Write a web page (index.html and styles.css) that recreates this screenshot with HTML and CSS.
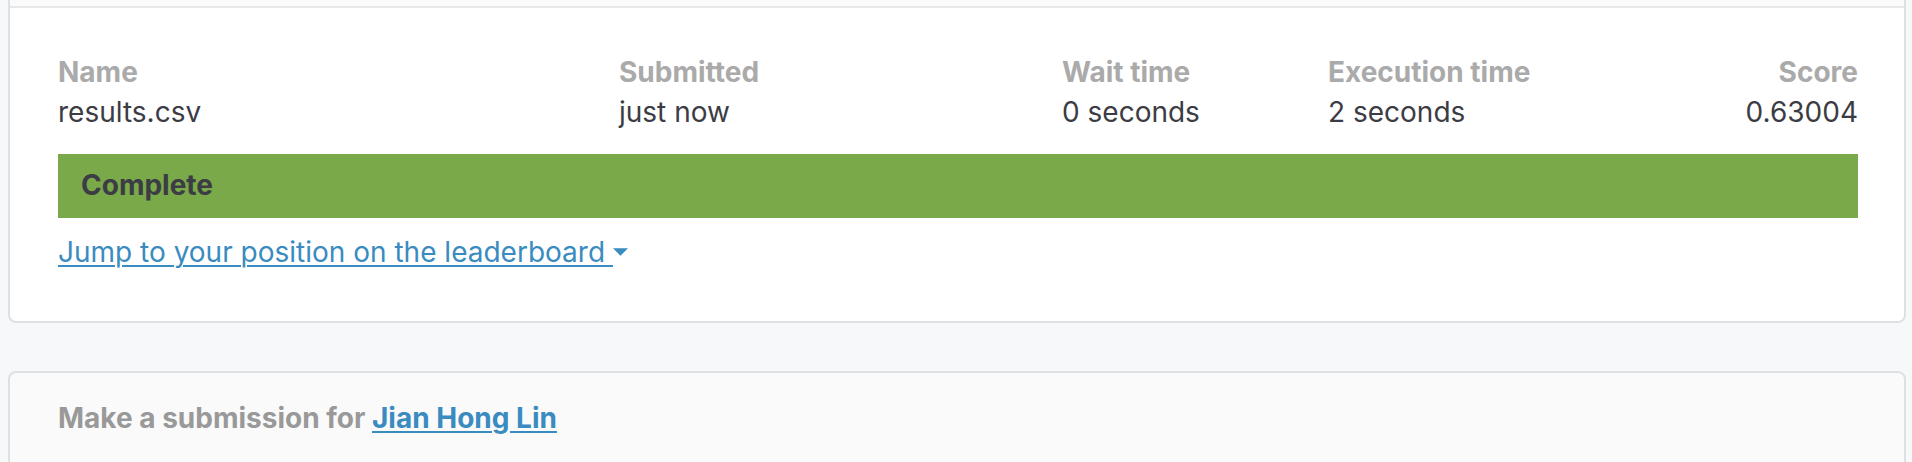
FILE: index.html
```html
<!DOCTYPE html>
<html lang="en">
<head>
<meta charset="utf-8">
<title>Submission</title>
<link rel="stylesheet" href="styles.css">
</head>
<body>
<div class="page">
  <section class="card result">
    <div class="card-head"></div>
    <div class="card-body">
      <div class="grid">
        <div class="label">Name</div>
        <div class="label">Submitted</div>
        <div class="label">Wait time</div>
        <div class="label">Execution time</div>
        <div class="label right">Score</div>
        <div class="value">results.csv</div>
        <div class="value">just now</div>
        <div class="value">0 seconds</div>
        <div class="value">2 seconds</div>
        <div class="value right">0.63004</div>
      </div>
      <div class="status">Complete</div>
      <a class="jump" href="#">Jump to your position on the leaderboard <svg class="caret" width="15" height="8" viewBox="0 0 15 8"><path d="M0 0.3h15L7.5 7.8z" fill="#3a8bbf"/></svg></a>
    </div>
  </section>
  <section class="card submit">
    <p class="submit-text">Make a submission for <a class="user" href="#">Jian Hong Lin</a></p>
  </section>
</div>
</body>
</html>
```
FILE: styles.css
```css
html, body {
  margin: 0;
  padding: 0;
  background: #f7f8fa;
  font-family: Inter, "Liberation Sans", Arial, sans-serif;
  font-size: 28px;
  line-height: 40px;
}
.page {
  padding: 0 6px 0 8px;
}
.card {
  border: 2px solid #dfe0e2;
  border-radius: 8px;
  overflow: hidden;
}
.result {
  margin-top: -40px;
  background: #fff;
}
.card-head {
  height: 44px;
  background: #fafafa;
  border-bottom: 2px solid #e8e8ea;
}
.card-body {
  padding: 44px 46px 49px 48px;
}
.grid {
  display: grid;
  grid-template-columns: 561px 443px 266px 1fr auto;
}
.label {
  color: #aaaaaa;
  font-weight: 700;
}
.value {
  color: #3c3c44;
}
.right {
  text-align: right;
}
.status {
  margin-top: 22px;
  height: 64px;
  line-height: 62px;
  background: #79a949;
  color: #3c3c44;
  font-weight: 700;
  padding-left: 23px;
}
.jump {
  display: inline-block;
  margin-top: 14px;
  color: #3a8bbf;
  text-decoration: underline;
  text-underline-offset: 3px;
  text-decoration-thickness: 2px;
}
.caret {
  display: inline-block;
  width: 15px;
  height: 8px;
  vertical-align: 6px;
}
.submit {
  margin-top: 48px;
  background: #fafafa;
  padding: 25px 48px 60px;
}
.submit-text {
  margin: 0;
  color: #999999;
  font-weight: 700;
}
.user {
  color: #3a8bbf;
  text-decoration: underline;
  text-underline-offset: 3px;
  text-decoration-thickness: 2px;
}
```
